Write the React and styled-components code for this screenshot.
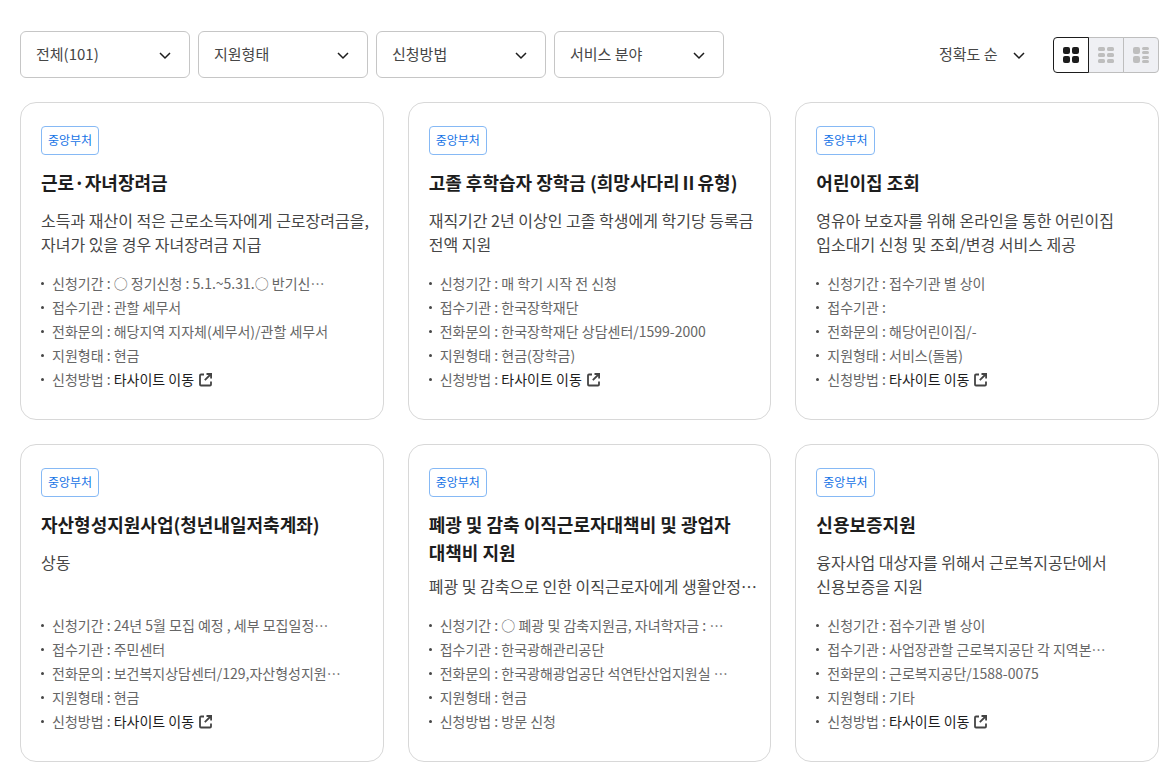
import React, { useState } from 'react';
import styled, { createGlobalStyle } from 'styled-components';

const GlobalStyle = createGlobalStyle`
  * {
    box-sizing: border-box;
  }

  body {
    margin: 0;
    background: #fff;
    color: #464646;
    font-family: 'Noto Sans CJK KR', 'Noto Sans', sans-serif;
    word-break: keep-all;
  }

  button,
  select {
    font-family: inherit;
  }
`;

const Page = styled.main`
  padding: 31px 9px 15px 20px;
`;

const Toolbar = styled.div`
  display: flex;
  align-items: center;
  justify-content: space-between;
  gap: 16px;
  margin-bottom: 24px;
`;

const ToolGroup = styled.div`
  display: flex;
  align-items: center;
  gap: ${props => props.$gap};
`;

const SelectBox = styled.label`
  display: grid;
  align-items: center;
  width: ${props => (props.$plain ? '90px' : '170px')};

  & > * {
    grid-area: 1 / 1;
  }

  & > svg {
    justify-self: end;
    margin-right: ${props => (props.$plain ? '0' : '15px')};
    pointer-events: none;
  }
`;

const Select = styled.select`
  appearance: none;
  width: 100%;
  height: 47px;
  padding: ${props => (props.$plain ? '0 0 2px' : '0 40px 2px 15px')};
  border: ${props => (props.$plain ? 'none' : '1px solid #c6c6c6')};
  border-radius: 6px;
  background: #fff;
  color: #464646;
  font-size: 15px;
`;

const ViewToggle = styled.div`
  display: flex;
`;

const ViewButton = styled.button`
  display: flex;
  align-items: center;
  justify-content: center;
  width: 36px;
  height: 36px;
  padding: 0;
  border: 1px solid ${props => (props.$active ? '#1d1d1d' : '#bebebe')};
  background: ${props => (props.$active ? '#fff' : '#eff0f4')};
  color: ${props => (props.$active ? '#1d1d1d' : '#bebebe')};
  position: relative;
  z-index: ${props => (props.$active ? 1 : 0)};
  cursor: pointer;

  &:first-child {
    border-radius: 4px 0 0 4px;
  }

  &:last-child {
    border-radius: 0 4px 4px 0;
  }

  & + & {
    margin-left: -1px;
  }
`;

const CardGrid = styled.ul`
  display: grid;
  grid-template-columns: repeat(3, minmax(0, 1fr));
  gap: 24px;
  margin: 0;
  padding: 0;
  list-style: none;
`;

const Card = styled.li`
  padding: 23px 12px 28px 20px;
  border: 1px solid #d8d8d8;
  border-radius: 16px;
`;

const Badge = styled.span`
  display: block;
  width: fit-content;
  padding: 0 6px 2px;
  border: 1px solid #86b9f5;
  border-radius: 4px;
  color: #1573e6;
  font-size: 12px;
  line-height: 25px;
`;

const Summary = styled.div`
  min-height: 88px;
  margin: 13px 0 15px;
`;

const Title = styled.h2`
  min-height: 32px;
  margin: 0 0 8px;
  padding-right: 16px;
  color: #1d1d1d;
  font-size: 18px;
  font-weight: 700;
  line-height: 28px;
  word-break: break-all;
`;

const Description = styled.p`
  margin: 0;
  font-size: 16px;
  line-height: 24px;
`;

const InfoList = styled.ul`
  margin: 0;
  padding: 0;
  list-style: none;
`;

const InfoItem = styled.li`
  display: flex;
  align-items: center;
  color: #666;
  font-size: 14px;
  line-height: 24px;
  white-space: pre;

  &::before {
    content: '';
    width: 3px;
    height: 3px;
    margin-right: 8px;
    border-radius: 50%;
    background: #464646;
  }
`;

const SiteLink = styled.a`
  display: flex;
  align-items: center;
  gap: 4px;
  color: #1d1d1d;
  text-decoration: none;
`;

const ChevronIcon = () => (
  <svg width="20" height="20" viewBox="0 0 20 20" fill="none" stroke="#1d1d1d" strokeWidth="1.5" aria-hidden="true">
    <path d="M5 8l5 5 5-5" />
  </svg>
);

const LinkIcon = () => (
  <svg width="16" height="16" viewBox="0 0 16 16" fill="none" stroke="#444" strokeWidth="1.8" aria-hidden="true">
    <path d="M6 3.5H3a1 1 0 0 0-1 1v9a1 1 0 0 0 1 1h9a1 1 0 0 0 1-1v-3" />
    <path d="M8.5 3h4.6v4.6M13 3L6.8 9.2" />
  </svg>
);

const viewShapes = {
  grid: [
    [0, 0, 7, 7], [9, 0, 7, 7],
    [0, 9, 7, 7], [9, 9, 7, 7],
  ],
  compact: [
    [0, 0, 7, 4], [9, 0, 7, 4],
    [0, 6, 7, 4], [9, 6, 7, 4],
    [0, 12, 7, 4], [9, 12, 7, 4],
  ],
  list: [
    [0, 0, 7, 7], [9, 0, 7, 3], [9, 4, 7, 3],
    [0, 9, 7, 7], [9, 9, 7, 3], [9, 13, 7, 3],
  ],
};

const ViewIcon = ({ type }) => (
  <svg width="16" height="16" viewBox="0 0 16 16" fill="currentColor" aria-hidden="true">
    {viewShapes[type].map(([x, y, width, height]) => (
      <rect key={`${x}-${y}`} x={x} y={y} width={width} height={height} rx={height > 4 ? 2 : 1.5} />
    ))}
  </svg>
);

const filters = ['전체(101)', '지원형태', '신청방법', '서비스 분야'];

const views = [
  { type: 'grid', label: '카드형 보기' },
  { type: 'compact', label: '간단히 보기' },
  { type: 'list', label: '목록형 보기' },
];

const services = [
  {
    title: '근로·자녀장려금',
    description: '소득과 재산이 적은 근로소득자에게 근로장려금을, 자녀가 있을 경우 자녀장려금 지급',
    period: '○ 정기신청 : 5.1.~5.31.○ 반기신⋯',
    agency: '관할 세무서',
    phone: '해당지역 지자체(세무서)/관할 세무서',
    support: '현금',
  },
  {
    title: '고졸 후학습자 장학금 (희망사다리Ⅱ유형)',
    description: '재직기간 2년 이상인 고졸 학생에게 학기당 등록금 전액 지원',
    period: '매 학기 시작 전 신청',
    agency: '한국장학재단',
    phone: '한국장학재단 상담센터/1599-2000',
    support: '현금(장학금)',
  },
  {
    title: '어린이집 조회',
    description: '영유아 보호자를 위해 온라인을 통한 어린이집 입소대기 신청 및 조회/변경 서비스 제공',
    period: '접수기관 별 상이',
    agency: '',
    phone: '해당어린이집/-',
    support: '서비스(돌봄)',
  },
  {
    title: '자산형성지원사업(청년내일저축계좌)',
    description: '상동',
    period: '24년 5월 모집 예정 , 세부 모집일정⋯',
    agency: '주민센터',
    phone: '보건복지상담센터/129,자산형성지원⋯',
    support: '현금',
  },
  {
    title: '폐광 및 감축 이직근로자대책비 및 광업자대책비 지원',
    description: '폐광 및 감축으로 인한 이직근로자에게 생활안정⋯',
    period: '○ 폐광 및 감축지원금, 자녀학자금 : ⋯',
    agency: '한국광해관리공단',
    phone: '한국광해광업공단 석연탄산업지원실 ⋯',
    support: '현금',
    method: '방문 신청',
  },
  {
    title: '신용보증지원',
    description: '융자사업 대상자를 위해서 근로복지공단에서 신용보증을 지원',
    period: '접수기관 별 상이',
    agency: '사업장관할 근로복지공단 각 지역본⋯',
    phone: '근로복지공단/1588-0075',
    support: '기타',
  },
];

const ServiceCard = ({ service }) => (
  <Card>
    <Badge>중앙부처</Badge>
    <Summary>
      <Title>{service.title}</Title>
      <Description>{service.description}</Description>
    </Summary>
    <InfoList>
      <InfoItem>신청기간 : {service.period}</InfoItem>
      <InfoItem>접수기관 : {service.agency}</InfoItem>
      <InfoItem>전화문의 : {service.phone}</InfoItem>
      <InfoItem>지원형태 : {service.support}</InfoItem>
      <InfoItem>
        {'신청방법 : '}
        {service.method || (
          <SiteLink href="#">
            타사이트 이동
            <LinkIcon />
          </SiteLink>
        )}
      </InfoItem>
    </InfoList>
  </Card>
);

const App = () => {
  const [view, setView] = useState('grid');

  return (
    <Page>
      <GlobalStyle />
      <Toolbar>
        <ToolGroup $gap="8px">
          {filters.map(filter => (
            <SelectBox key={filter}>
              <Select aria-label={filter}>
                <option>{filter}</option>
              </Select>
              <ChevronIcon />
            </SelectBox>
          ))}
        </ToolGroup>
        <ToolGroup $gap="24px">
          <SelectBox $plain>
            <Select $plain aria-label="정렬">
              <option>정확도 순</option>
            </Select>
            <ChevronIcon />
          </SelectBox>
          <ViewToggle>
            {views.map(({ type, label }) => (
              <ViewButton
                key={type}
                type="button"
                aria-label={label}
                aria-pressed={view === type}
                $active={view === type}
                onClick={() => setView(type)}
              >
                <ViewIcon type={type} />
              </ViewButton>
            ))}
          </ViewToggle>
        </ToolGroup>
      </Toolbar>

      <CardGrid>
        {services.map(service => (
          <ServiceCard key={service.title} service={service} />
        ))}
      </CardGrid>
    </Page>
  );
};

export default App;
